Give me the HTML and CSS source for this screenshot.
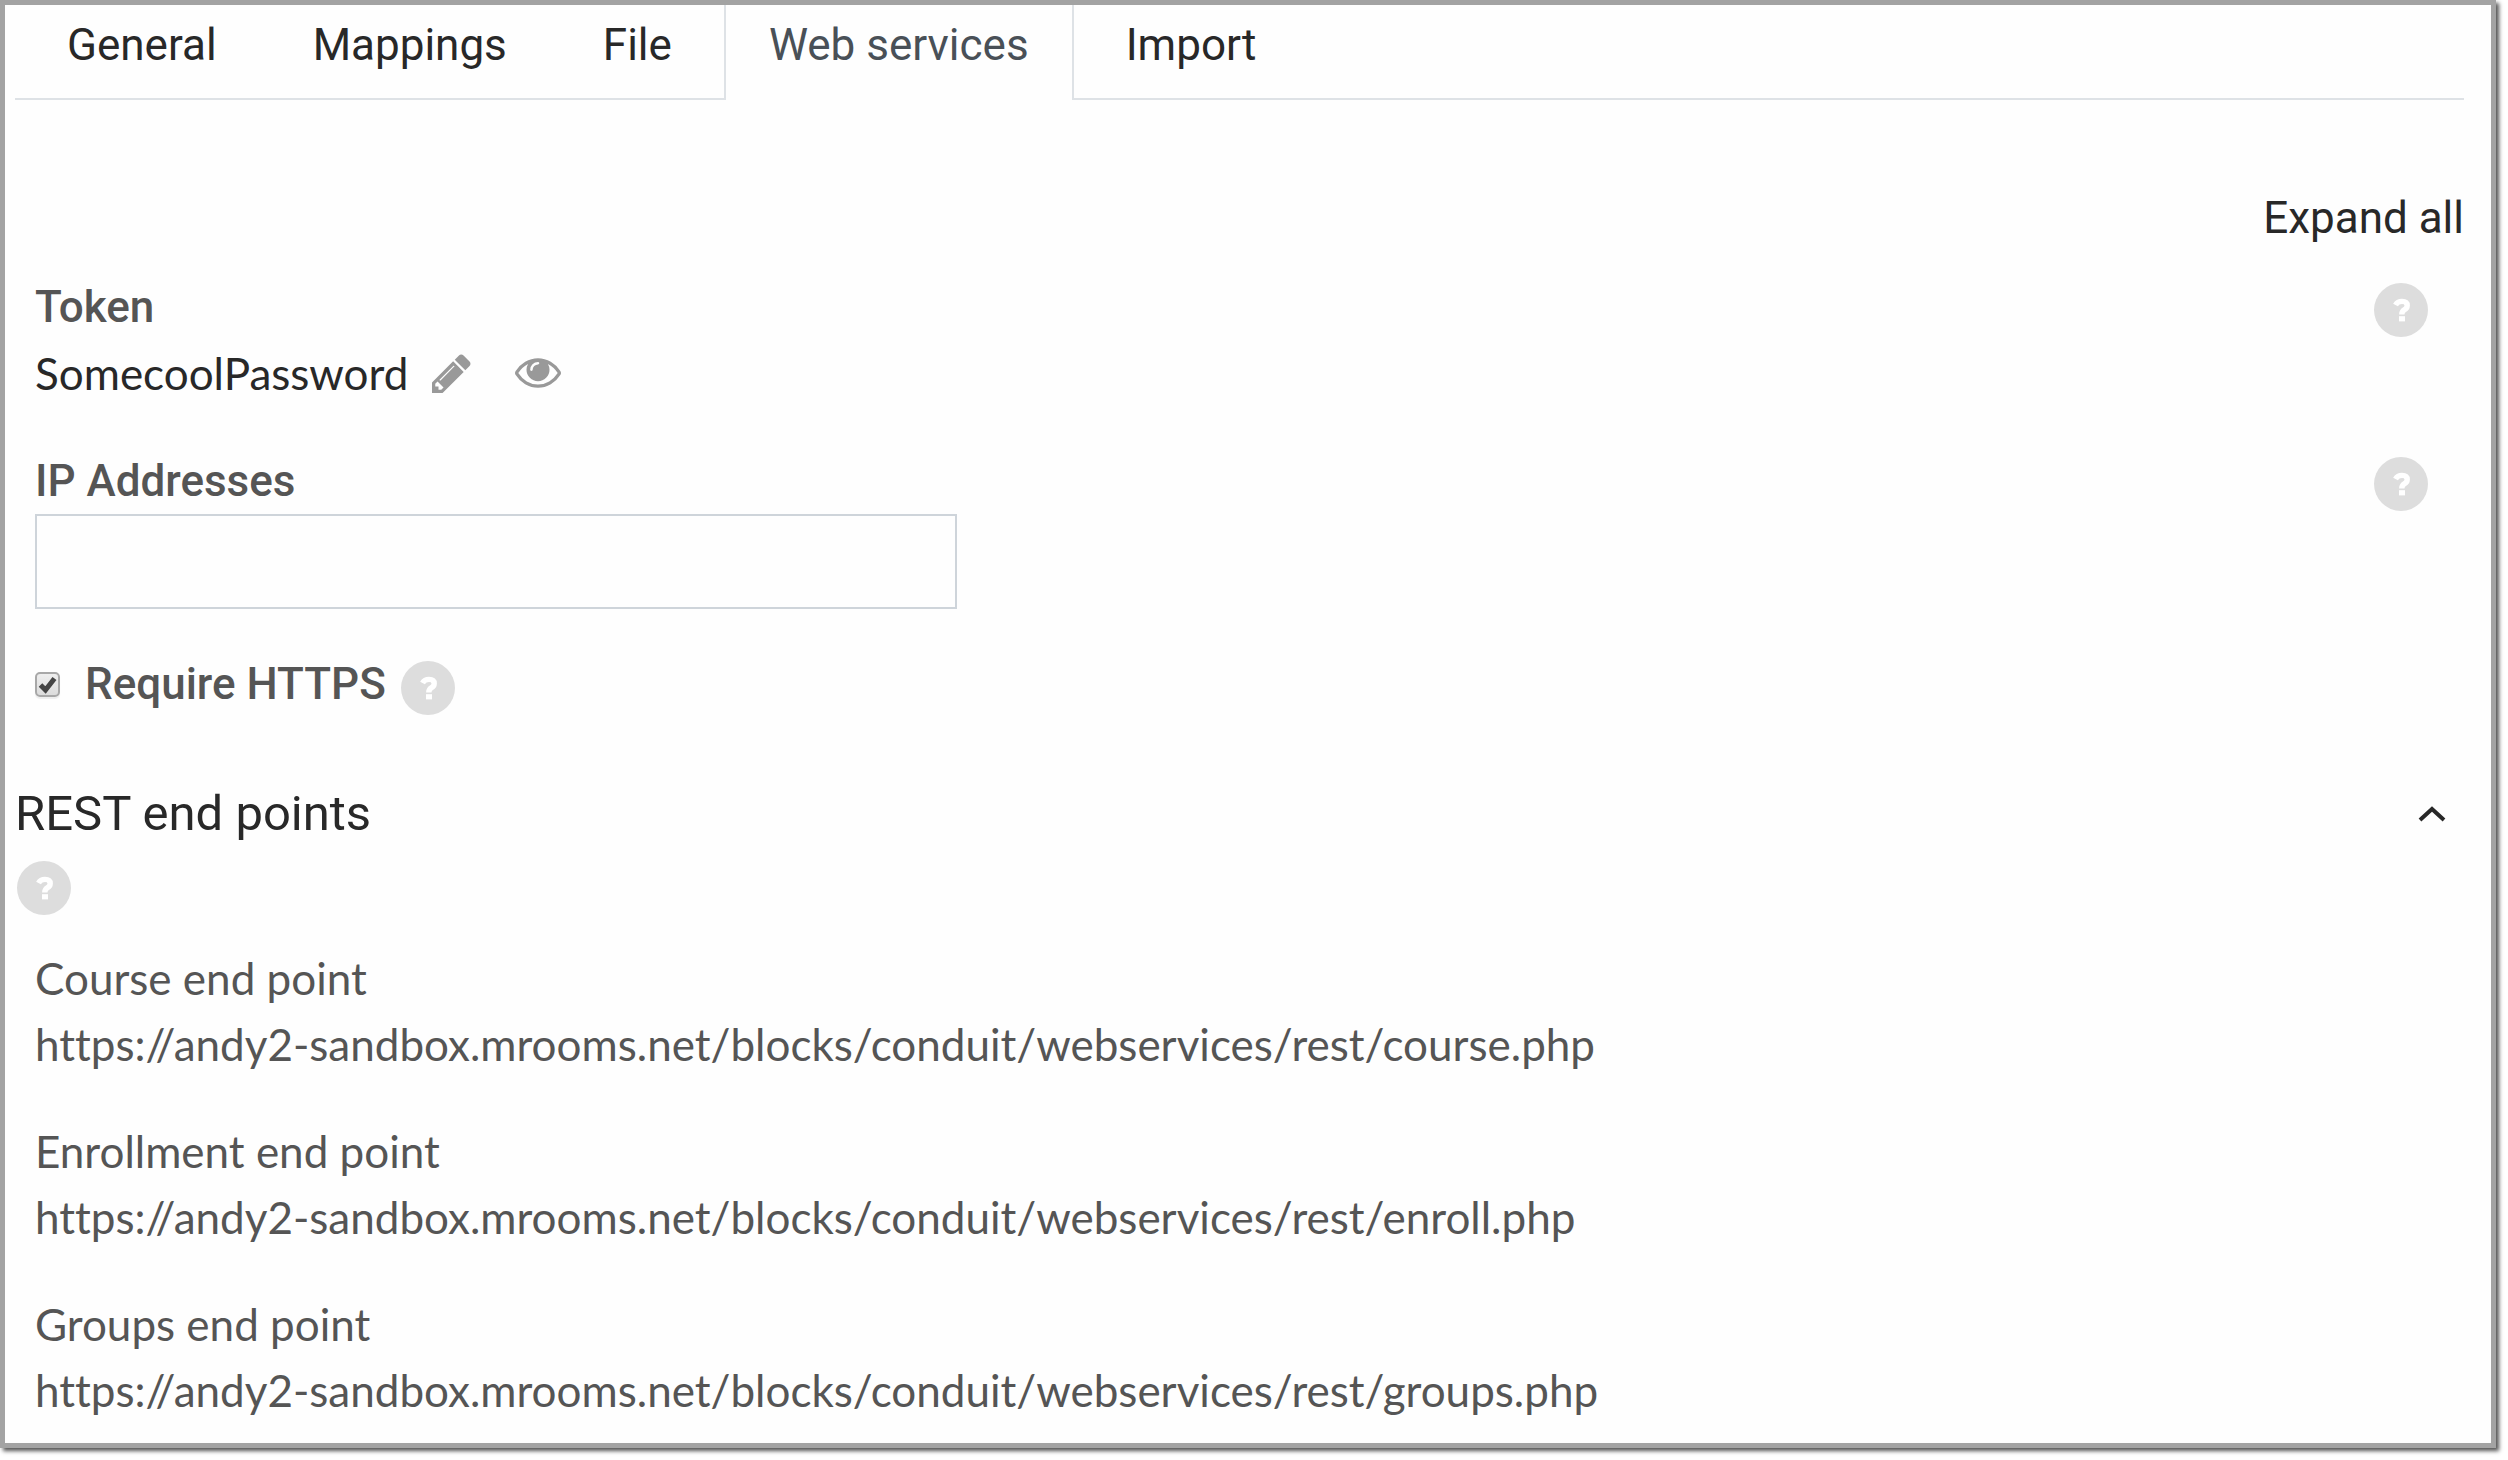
FILE: index.html
```html
<!DOCTYPE html>
<html lang="en">
<head>
    <meta charset="UTF-8">
    <meta name="viewport" content="width=device-width, initial-scale=1.0">
    <title>Conduit - Web services</title>
    <link rel="stylesheet" href="styles.css">
</head>
<body>
    <!-- Shared icons -->
    <svg class="sprite" aria-hidden="true">
        <symbol id="icon-help" viewBox="0 0 54 54">
            <circle cx="27" cy="27" r="27" fill="#ddd"/>
            <path d="M21.500 22Q23.500 18.400 28 18.400Q33.200 18.400 33.200 22.400Q33.200 25.200 30.200 26.800Q27.800 28.200 27.800 31.600" fill="none" stroke="#fff" stroke-width="5.4"/>
            <rect x="25" y="33.200" width="6" height="5.200" fill="#fff"/>
        </symbol>
    </svg>

    <div class="page">
        <!-- Tabs -->
        <nav>
            <ul class="tabs">
                <li><a class="tab" href="#">General</a></li>
                <li><a class="tab" href="#">Mappings</a></li>
                <li><a class="tab" href="#">File</a></li>
                <li class="current"><a class="tab active" href="#" aria-current="page">Web services</a></li>
                <li><a class="tab" href="#">Import</a></li>
            </ul>
        </nav>

        <main>
            <div class="expand">
                <a href="#">Expand all</a>
            </div>

            <form class="settings">
                <!-- Token -->
                <div class="field">
                    <div class="field-main">
                        <h3 class="label">Token</h3>
                        <div class="token">
                            <span>SomecoolPassword</span>
                            <button type="button" class="icon-button" aria-label="Edit token">
                                <svg viewBox="0 0 1536 1536"><path d="M363 1408l91-91-235-235-91 91v107h128v128h107zm523-928q0-22-22-22-10 0-17 7l-542 542q-7 7-7 17 0 22 22 22 10 0 17-7l542-542q7-7 7-17zm-54-192l416 416-832 832H0v-416zm683 96q0 53-37 90l-166 166-416-416 166-165q36-38 90-38 53 0 91 38l235 234q37 39 37 91z"/></svg>
                            </button>
                            <button type="button" class="icon-button eye" aria-label="Reveal token">
                                <svg viewBox="0 0 1792 1152"><path d="M1664 576q-152-236-381-353 61 104 61 225 0 185-131.500 316.500T896 896 579.500 764.500 448 448q0-121 61-225-229 117-381 353 133 205 333.500 326.500T896 1024t434.500-121.500T1664 576zM944 192q0-20-14-34t-34-14q-125 0-214.500 89.500T592 448q0 20 14 34t34 14 34-14 14-34q0-86 61-147t147-61q20 0 34-14t14-34zm848 384q0 34-20 69-140 230-376.500 368.500T896 1152t-499.500-139T20 645Q0 610 0 576t20-69q140-229 376.500-368T896 0t499.500 139T1772 507q20 35 20 69z"/></svg>
                            </button>
                        </div>
                    </div>
                    <button type="button" class="help" aria-label="Help with Token"><svg><use href="#icon-help"/></svg></button>
                </div>

                <!-- IP addresses -->
                <div class="field">
                    <div class="field-main">
                        <label class="label" for="ipAddresses">IP Addresses</label>
                        <input type="text" class="text-input" id="ipAddresses">
                    </div>
                    <button type="button" class="help" aria-label="Help with IP Addresses"><svg><use href="#icon-help"/></svg></button>
                </div>

                <!-- HTTPS -->
                <div class="check">
                    <input type="checkbox" id="requireHttps" checked>
                    <label class="label" for="requireHttps">Require HTTPS</label>
                    <button type="button" class="help" aria-label="Help with Require HTTPS"><svg><use href="#icon-help"/></svg></button>
                </div>
            </form>

            <!-- REST end points -->
            <section>
                <div class="section-head">
                    <h2>REST end points</h2>
                    <button type="button" class="toggle" aria-label="Collapse REST end points">
                        <svg viewBox="0 0 28 16"><path d="M2 14L14 3L26 14" fill="none" stroke="#282828" stroke-width="4"/></svg>
                    </button>
                </div>
                <button type="button" class="help" aria-label="Help with REST end points"><svg><use href="#icon-help"/></svg></button>

                <dl class="endpoints">
                    <div>
                        <dt>Course end point</dt>
                        <dd>https://andy2-sandbox.mrooms.net/blocks/conduit/webservices/rest/course.php</dd>
                    </div>
                    <div>
                        <dt>Enrollment end point</dt>
                        <dd>https://andy2-sandbox.mrooms.net/blocks/conduit/webservices/rest/enroll.php</dd>
                    </div>
                    <div>
                        <dt>Groups end point</dt>
                        <dd>https://andy2-sandbox.mrooms.net/blocks/conduit/webservices/rest/groups.php</dd>
                    </div>
                </dl>
            </section>
        </main>
    </div>
</body>
</html>
```

FILE: styles.css
```css
/* General Styling */
* {
    box-sizing: border-box;
}

body {
    margin: 0;
    background-color: #fff;
    font-family: Lato, sans-serif;
    font-size: 44px;
    font-variant-ligatures: none;
    line-height: 66px;
    color: #555;
}

h2, h3, ul, dl, dd {
    margin: 0;
    padding: 0;
}

a {
    color: #282828;
    text-decoration: none;
}

button {
    display: block;
    flex: none;
    margin: 0;
    padding: 0;
    border: 0;
    background: none;
}

svg {
    display: block;
    width: 100%;
    height: 100%;
}

.sprite {
    display: none;
}

.page {
    margin: 0 12px 12px 0;
    padding: 0 27px 20px 10px;
    border: 5px solid #a3a3a3;
    background-color: #fefefe;
    box-shadow: 3px 3px 4px #555;
}

/* Tabs */
.tabs {
    display: flex;
    padding-left: 4px;
    border-bottom: 2px solid #dee2e6;
    list-style: none;
    font-family: Roboto, sans-serif;
}

.tab {
    display: block;
    padding: 7px 46px 20px;
    border: solid transparent;
    border-width: 0 2px;
}

.current {
    margin: 0 4px -2px;
}

.tab.active {
    padding: 7px 43px 22px;
    border-color: #dee2e6;
    background-color: #fefefe;
    color: #495057;
}

.expand {
    margin-top: 85px;
    font-family: Roboto, sans-serif;
    text-align: right;
}

/* Settings */
.settings {
    padding: 23px 36px 0 20px;
}

.field {
    display: flex;
    justify-content: space-between;
    align-items: flex-start;
    margin-bottom: 42px;
}

.field .help {
    margin-top: 9px;
}

.label {
    display: block;
    font-family: Roboto, sans-serif;
    font-size: 44px;
    font-weight: 500;
}

.token {
    display: flex;
    align-items: center;
    color: #282828;
}

.icon-button {
    width: 39px;
    height: 39px;
    margin-left: 24px;
}

.icon-button svg {
    fill: #999;
}

.icon-button.eye {
    width: 46px;
    height: 30px;
    margin-left: 44px;
}

.help {
    width: 54px;
    height: 54px;
}

.text-input {
    display: block;
    width: 922px;
    max-width: 100%;
    height: 95px;
    padding: 0 20px;
    border: 2px solid #ced4da;
    background-color: #fefefe;
    font: inherit;
}

.check {
    display: flex;
    align-items: center;
}

.check input {
    width: 25px;
    height: 25px;
    margin: 0 25px 0 0;
    appearance: none;
    border: 2px solid #a8a8a8;
    border-radius: 5px;
    background: url("data:image/svg+xml,%3Csvg xmlns='http://www.w3.org/2000/svg' viewBox='0 0 21 21'%3E%3Cpath d='M3.500 11L8.500 16L17.500 4.500' fill='none' stroke='%23444' stroke-width='5'/%3E%3C/svg%3E") center no-repeat, linear-gradient(#eee, #dcdcdc);
    box-shadow: 0 2px 1px #eee;
}

.check .help {
    margin: 8px 0 0 15px;
}

/* REST end points */
.section-head {
    display: flex;
    justify-content: space-between;
    align-items: center;
    margin-top: 64px;
    padding-right: 18px;
}

.section-head h2 {
    font-family: Roboto, sans-serif;
    font-size: 49px;
    font-weight: 400;
    color: #282828;
}

.toggle {
    width: 28px;
    height: 16px;
}

section > .help {
    margin: 14px 0 0 2px;
}

.endpoints {
    display: grid;
    gap: 41px;
    padding: 30px 20px 0;
}
```
